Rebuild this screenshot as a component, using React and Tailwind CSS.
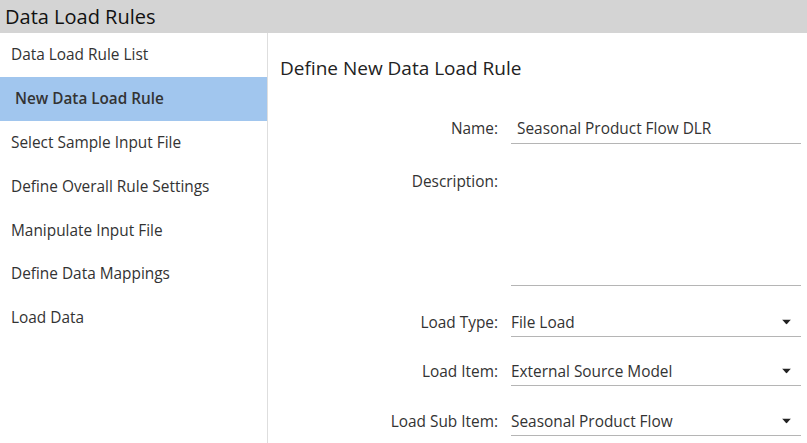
const navItems = [
  'Data Load Rule List',
  'New Data Load Rule',
  'Select Sample Input File',
  'Define Overall Rule Settings',
  'Manipulate Input File',
  'Define Data Mappings',
  'Load Data',
];

function Caret() {
  return (
    <svg width="9" height="5" viewBox="0 0 9 5" className="absolute right-[10px] top-1/2 -translate-y-1/2">
      <path d="M0 0 L9 0 L4.5 5 Z" fill="#222" />
    </svg>
  );
}

function SelectField({ value }) {
  return (
    <div className="relative h-[30px] border-b border-[#b5b5b5] flex items-center pt-[2px] text-[#333]">
      {value}
      <Caret />
    </div>
  );
}

export default function App() {
  return (
    <div className="w-[807px] h-[443px] flex flex-col bg-white text-[#333] overflow-hidden" style={{ fontFamily: '"Open Sans", "Noto Sans", sans-serif' }}>
      <div className="h-[33px] bg-[#d4d4d4] flex items-center px-[5px] text-[20px] text-[#111] shrink-0">
        Data Load Rules
      </div>
      <div className="flex flex-1 min-h-0">
        <div className="w-[268px] border-r border-[#dedede] shrink-0">
          {navItems.map((item, i) => (
            <div
              key={item}
              className={
                i === 1
                  ? 'h-[43.8px] flex items-center pl-[15px] bg-[#a1c6ee] font-semibold text-[15.3px] text-[#333]'
                  : 'h-[43.8px] flex items-center pl-[11px] text-[15.4px] text-[#333]'
              }
            >
              {item}
            </div>
          ))}
        </div>
        <div className="flex-1 pl-[12px] pr-[6px]">
          <div className="h-[70px] flex items-center text-[19px] text-[#222] pt-[1px]">Define New Data Load Rule</div>
          <div className="grid grid-cols-[218px_1fr] gap-x-[13px] text-[15.4px]">
            <div className="h-[41px] flex items-end justify-end pb-[4px]">Name:</div>
            <div className="h-[41px] flex items-end border-b border-[#b5b5b5] pl-[6px] pb-[3px]">Seasonal Product Flow DLR</div>

            <div className="h-[142px] flex justify-end pt-[26px]">Description:</div>
            <div className="h-[142px] border-b border-[#b5b5b5]"></div>

            <div className="h-[51px] flex items-end justify-end pb-[3px]">Load Type:</div>
            <div className="h-[51px] flex items-end"><div className="w-full"><SelectField value="File Load" /></div></div>

            <div className="h-[49px] flex items-end justify-end pb-[3px]">Load Item:</div>
            <div className="h-[49px] flex items-end"><div className="w-full"><SelectField value="External Source Model" /></div></div>

            <div className="h-[50px] flex items-end justify-end pb-[3px]">Load Sub Item:</div>
            <div className="h-[50px] flex items-end"><div className="w-full"><SelectField value="Seasonal Product Flow" /></div></div>
          </div>
        </div>
      </div>
    </div>
  );
}
